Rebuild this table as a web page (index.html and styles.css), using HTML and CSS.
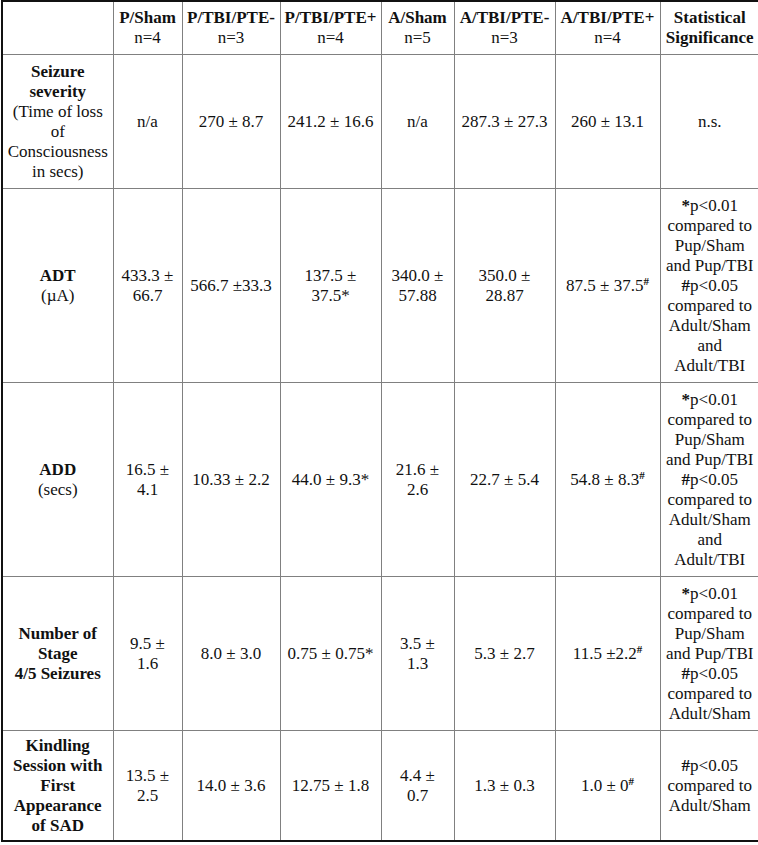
FILE: index.html
```html
<!DOCTYPE html>
<html lang="en">
<head>
    <meta charset="UTF-8">
    <meta name="viewport" content="width=device-width, initial-scale=1.0">
    <title>Kindling Results</title>
    <link rel="stylesheet" href="styles.css">
</head>
<body>
    <table class="results">
        <colgroup>
            <col class="c-label">
            <col class="c-psham">
            <col class="c-pneg">
            <col class="c-ppos">
            <col class="c-asham">
            <col class="c-aneg">
            <col class="c-apos">
            <col class="c-stat">
        </colgroup>
        <thead>
            <tr>
                <th></th>
                <th><b>P/Sham</b><br>n=4</th>
                <th><b>P/TBI/PTE-</b><br>n=3</th>
                <th><b>P/TBI/PTE+</b><br>n=4</th>
                <th><b>A/Sham</b><br>n=5</th>
                <th><b>A/TBI/PTE-</b><br>n=3</th>
                <th><b>A/TBI/PTE+</b><br>n=4</th>
                <th><b>Statistical<br>Significance</b></th>
            </tr>
        </thead>
        <tbody>
            <tr>
                <td class="label"><b>Seizure<br>severity</b><br>(Time of loss<br>of<br>Consciousness<br>in secs)</td>
                <td>n/a</td>
                <td>270 ± 8.7</td>
                <td>241.2 ± 16.6</td>
                <td>n/a</td>
                <td>287.3 ± 27.3</td>
                <td>260 ± 13.1</td>
                <td>n.s.</td>
            </tr>
            <tr>
                <td class="label"><b>ADT</b><br>(µA)</td>
                <td>433.3 ±<br>66.7</td>
                <td>566.7 ±33.3</td>
                <td>137.5 ±<br>37.5*</td>
                <td>340.0 ±<br>57.88</td>
                <td>350.0 ±<br>28.87</td>
                <td>87.5 ± 37.5<sup>#</sup></td>
                <td><b>*</b>p&lt;0.01<br>compared to<br>Pup/Sham<br>and Pup/TBI<br><b>#</b>p&lt;0.05<br>compared to<br>Adult/Sham<br>and<br>Adult/TBI</td>
            </tr>
            <tr>
                <td class="label"><b>ADD</b><br>(secs)</td>
                <td>16.5 ±<br>4.1</td>
                <td>10.33 ± 2.2</td>
                <td>44.0 ± 9.3*</td>
                <td>21.6 ±<br>2.6</td>
                <td>22.7 ± 5.4</td>
                <td>54.8 ± 8.3<sup>#</sup></td>
                <td><b>*</b>p&lt;0.01<br>compared to<br>Pup/Sham<br>and Pup/TBI<br><b>#</b>p&lt;0.05<br>compared to<br>Adult/Sham<br>and<br>Adult/TBI</td>
            </tr>
            <tr>
                <td class="label"><b>Number of<br>Stage<br>4/5 Seizures</b></td>
                <td>9.5 ±<br>1.6</td>
                <td>8.0 ± 3.0</td>
                <td>0.75 ± 0.75*</td>
                <td>3.5 ±<br>1.3</td>
                <td>5.3 ± 2.7</td>
                <td>11.5 ±2.2<sup>#</sup></td>
                <td><b>*</b>p&lt;0.01<br>compared to<br>Pup/Sham<br>and Pup/TBI<br><b>#</b>p&lt;0.05<br>compared to<br>Adult/Sham</td>
            </tr>
            <tr class="last">
                <td class="label"><b>Kindling<br>Session with<br>First<br>Appearance<br>of SAD</b></td>
                <td>13.5 ±<br>2.5</td>
                <td>14.0 ± 3.6</td>
                <td>12.75 ± 1.8</td>
                <td>4.4 ±<br>0.7</td>
                <td>1.3 ± 0.3</td>
                <td>1.0 ± 0<sup>#</sup></td>
                <td><b>#</b>p&lt;0.05<br>compared to<br>Adult/Sham</td>
            </tr>
        </tbody>
    </table>
</body>
</html>
```

FILE: styles.css
```css
body {
    margin: 0;
    background-color: #fff;
    font-family: "Liberation Serif", "Times New Roman", serif;
    font-size: 17px;
    line-height: 20px;
    color: #111;
}
.results {
    width: 758px;
    table-layout: fixed;
    border-collapse: collapse;
    border-top: 2px solid #111;
    border-left: 2px solid #111;
    border-bottom: 2px solid #111;
    margin-left: 1px;
}
.results th,
.results td {
    padding: 7px 3px 6px;
    border: 1px solid #808080;
    text-align: center;
    vertical-align: middle;
    font-weight: normal;
}
.results th {
    padding: 6px 3px;
}
.results th:first-child,
.results td:first-child {
    border-left: 2px solid #111;
}
.results th:last-child,
.results td:last-child {
    border-right: none;
}
.results thead th {
    border-top: 2px solid #111;
}
.results .last td {
    padding: 5px 3px 4px;
    border-bottom: 2px solid #111;
}
.c-label { width: 111px; }
.c-psham { width: 69px; }
.c-pneg { width: 98px; }
.c-ppos { width: 101px; }
.c-asham { width: 73px; }
.c-aneg { width: 101px; }
.c-apos { width: 105px; }
.c-stat { width: 99px; }
sup {
    font-size: 11px;
    line-height: 0;
    vertical-align: 6px;
    font-weight: bold;
}
```
